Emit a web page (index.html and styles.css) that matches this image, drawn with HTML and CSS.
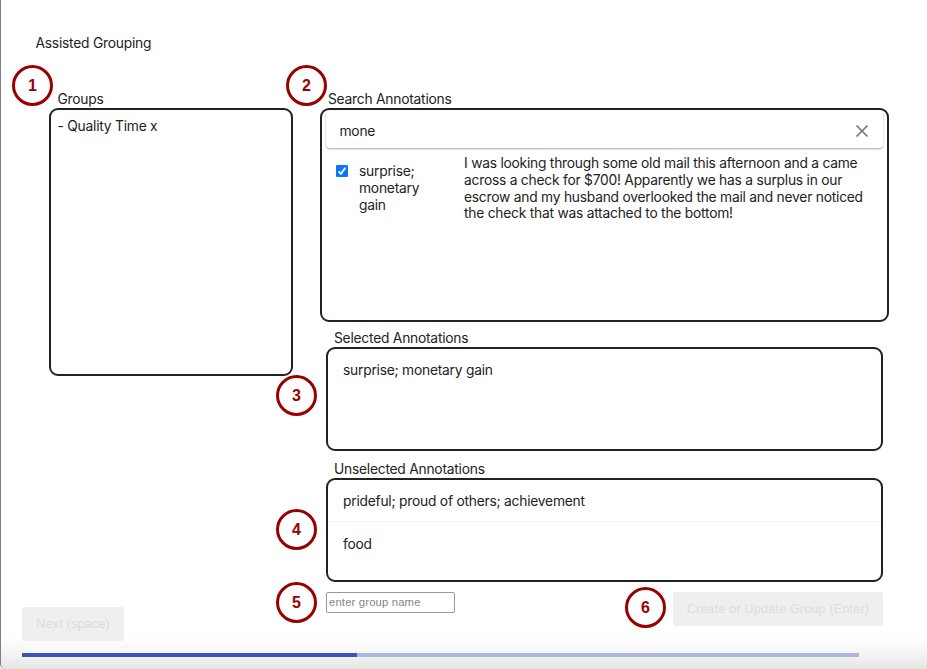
FILE: index.html
```html
<!DOCTYPE html>
<html lang="en">
<head>
<meta charset="utf-8">
<title>Assisted Grouping</title>
<link rel="stylesheet" href="styles.css">
</head>
<body>
<div class="window">
  <h1 class="title"><span>Assisted Grouping</span></h1>
  <div class="columns">
    <section class="groups">
      <h2 class="label">Groups</h2>
      <div class="panel groups-panel"><span>- Quality Time x</span></div>
      <button class="button next" disabled>Next (space)</button>
      <span class="marker m1">1</span>
    </section>
    <main class="work">
      <section class="search">
        <h2 class="label">Search Annotations</h2>
        <div class="panel search-panel">
          <div class="searchbar">
            <span class="query">mone</span>
            <svg class="clear" viewBox="0 0 14 14"><path d="M1.5 1.5 12.5 12.5M12.5 1.5 1.5 12.5"/></svg>
          </div>
          <div class="result">
            <svg class="check" viewBox="0 0 12 12"><rect width="12" height="12" rx="1.2"/><path d="M2.6 6.4 4.9 8.8 9.4 2.8"/></svg>
            <p class="tags">surprise;<br>monetary<br>gain</p>
            <p class="story">I was looking through some old mail this afternoon and a came<br>across a check for $700! Apparently we has a surplus in our<br>escrow and my husband overlooked the mail and never noticed<br>the check that was attached to the bottom!</p>
          </div>
        </div>
        <span class="marker m2">2</span>
      </section>
      <section class="block selected">
        <h2 class="label">Selected Annotations</h2>
        <div class="panel list"><div class="item">surprise; monetary gain</div></div>
        <span class="marker m3">3</span>
      </section>
      <section class="block unselected">
        <h2 class="label">Unselected Annotations</h2>
        <div class="panel list">
          <div class="item ruled">prideful; proud of others; achievement</div>
          <div class="item">food</div>
        </div>
        <span class="marker m4">4</span>
      </section>
      <div class="actions">
        <input class="name" type="text" placeholder="enter group name">
        <button class="button create" disabled>Create or Update Group (Enter)</button>
        <span class="marker m5">5</span>
        <span class="marker m6">6</span>
      </div>
    </main>
  </div>
  <div class="progress"><div class="done"></div></div>
</div>
</body>
</html>
```
FILE: styles.css
```css
* { box-sizing: border-box; }
body { margin: 0; background: #fff; overflow: hidden; }
h1, h2, p { margin: 0; font-weight: 400; }
.window {
  width: 927px;
  height: 669px;
  border-left: 1px solid #808080;
  border-bottom-left-radius: 5px;
  padding-left: 21px;
  background: linear-gradient(to bottom, #fff 636px, #f5f5f5 653px, #e5e5e5 669px);
  font: 13.8px/16.67px Inter, "Liberation Sans", sans-serif;
  letter-spacing: -.23px;
  color: #222;
}
.title { height: 90px; padding: 35px 0 0 13.5px; font-size: 13.8px; line-height: 17px; }
.columns { display: flex; height: 563px; }
.groups { position: relative; width: 298px; }
.groups .label { padding-left: 35.5px; }
.label { height: 18px; font-size: 13.8px; line-height: 18px; }
.panel { border: 2px solid #222; border-radius: 9px; background: #fff; }
.groups-panel { width: 244px; height: 268px; margin-left: 27px; padding: 8px 6.5px; }
.work { width: 570px; }
.search, .block, .actions { position: relative; }
.search .label { padding-left: 8px; }
.search-panel { width: 569px; height: 214px; padding: 0 4px; }
.searchbar {
  display: flex;
  justify-content: space-between;
  align-items: center;
  height: 38px;
  padding: 4px 14px 0 13.5px;
  border-radius: 4px;
  box-shadow: 0 1px 2px rgba(0,0,0,.35);
  clip-path: inset(0 -3px -4px -3px);
}
.clear { width: 14px; height: 14px; fill: none; stroke: #777; stroke-width: 1.7; }
.result { display: flex; padding-top: 7px; }
.check { flex: none; width: 12px; height: 12px; margin: 10px 11px 0 10px; fill: #0b76f5; }
.check path { fill: none; stroke: #fff; stroke-width: 1.8; }
.tags { width: 105px; padding-top: 8.2px; }
.story { white-space: nowrap; padding-top: .2px; }
.block { width: 557px; margin-left: 6px; }
.block .label { padding-left: 8px; }
.selected { padding-top: 7px; }
.unselected { padding-top: 9px; }
.list { height: 104px; }
.item { height: 42px; padding-left: 15px; line-height: 42px; }
.ruled { border-bottom: 1px solid #f1f1f1; }
.ruled + .item { line-height: 44px; }
.actions { display: flex; justify-content: space-between; width: 557px; margin: 10px 0 0 6px; }
.name {
  width: 129px;
  height: 21px;
  padding: 0 2px 1px;
  border: 1px solid #999;
  border-radius: 2px;
  font: 11.3px "Liberation Sans", sans-serif;
  letter-spacing: .15px;
}
.name::placeholder { color: #858585; }
.button {
  height: 34px;
  padding: 0;
  border: 0;
  border-radius: 3px;
  background: #efefef;
  color: #dcdcdc;
  font: 12.5px "Liberation Sans", sans-serif;
  letter-spacing: .22px;
}
.next { display: block; width: 102px; margin-top: 231px; }
.create { width: 210px; }
.progress { width: 837px; height: 4px; background: #b0b5df; }
.done { width: 335px; height: 4px; background: #3f51b5; }
.marker {
  position: absolute;
  width: 41px;
  height: 41px;
  border: 3px solid #900;
  border-radius: 50%;
  background: #fff;
  color: #900;
  font: bold 16px/35px "Liberation Sans", sans-serif;
  letter-spacing: 0;
  text-align: center;
}
.m1 { left: -10px; top: -25px; }
.m2 { left: -34px; top: -25px; }
.m3 { left: -50px; top: 53px; }
.m4 { left: -50px; top: 58px; }
.m5 { left: -50px; top: -10px; }
.m6 { left: 299px; top: -5px; }
```
